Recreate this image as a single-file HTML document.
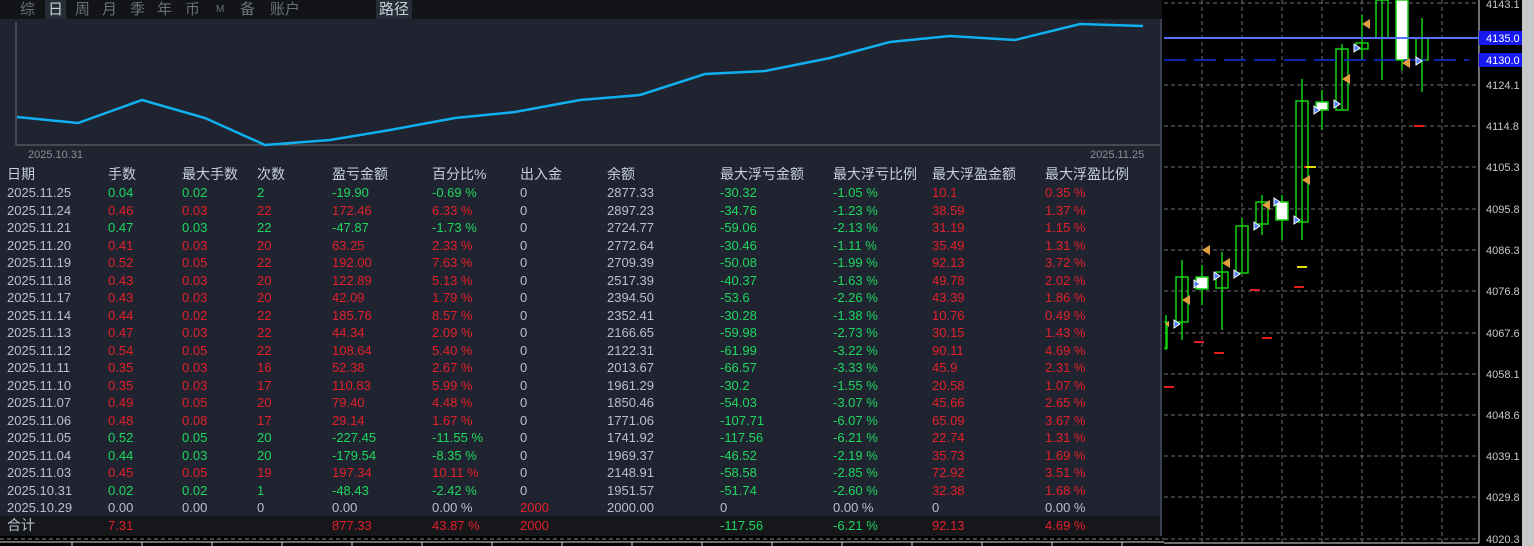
<!DOCTYPE html>
<html><head><meta charset="utf-8"><style>
*{margin:0;padding:0;box-sizing:border-box}
body{width:1534px;height:546px;background:#000;position:relative;overflow:hidden;font-family:"Liberation Sans","Noto Sans CJK SC",sans-serif;font-size:13px}
#panel{position:absolute;left:0;top:0;width:1162px;height:536px;background:#1f2430;border-right:2px solid #3a4150;border-bottom:2px solid #3a4150}
#tabs{position:absolute;left:0;top:0;width:1162px;height:19px;background:#121417}
#tabs span{position:absolute;top:0;font-size:15px;color:#6a7078;line-height:19px}
.sel{background:#262c36;color:#c8d0dc!important;padding:0 3px}
.r{position:absolute;left:0;width:1160px;height:17.5px;line-height:17.5px}
.r span{position:absolute;white-space:nowrap}
.g{color:#1ed760}.d{color:#e2202a}.w{color:#b8c0cc}
.h{color:#c8d0dc;font-size:14px}
</style></head><body>
<div id="panel">
<div id="tabs">
<span style="left:20px">综</span><span class="sel" style="left:45px">日</span><span style="left:75px">周</span><span style="left:102px">月</span><span style="left:130px">季</span><span style="left:157px">年</span><span style="left:185px">币</span><span style="left:216px;font-size:10px">M</span><span style="left:240px">备</span><span style="left:270px">账户</span><span class="sel" style="left:376px">路径</span>
</div>
<svg style="position:absolute;left:0;top:0" width="1162" height="170">
<polyline points="16,22 16,145 1160,145" fill="none" stroke="#6a6e74" stroke-width="1"/>
<polyline points="17,117 78,123 142,100 205,118 265,145 330,140 390,130 455,118 515,112 580,100 640,95 705,74 765,71 830,58 890,42 950,36 1015,40 1080,24 1143,26" fill="none" stroke="#10b0f0" stroke-width="2.5"/>
<text x="28" y="158" fill="#8a9098" font-size="11" font-family="Liberation Sans">2025.10.31</text>
<text x="1090" y="158" fill="#8a9098" font-size="11" font-family="Liberation Sans">2025.11.25</text>
</svg>
<div class="r h" style="top:166px"><span style="left:7px">日期</span><span style="left:108px">手数</span><span style="left:182px">最大手数</span><span style="left:257px">次数</span><span style="left:332px">盈亏金额</span><span style="left:432px">百分比%</span><span style="left:520px">出入金</span><span style="left:607px">余额</span><span style="left:720px">最大浮亏金额</span><span style="left:833px">最大浮亏比例</span><span style="left:932px">最大浮盈金额</span><span style="left:1045px">最大浮盈比例</span></div>
<div id="rows"></div>
<div style="position:absolute;left:0;top:516px;width:1160px;height:20px;background:#15171b"></div>
<div class="r" style="top:517px;font-size:13px"><span class="w" style="left:7px;font-size:14px">合计</span><span class="d" style="left:108px">7.31</span><span class="d" style="left:332px">877.33</span><span class="d" style="left:432px">43.87 %</span><span class="d" style="left:520px">2000</span><span class="g" style="left:720px">-117.56</span><span class="g" style="left:833px">-6.21 %</span><span class="d" style="left:932px">92.13</span><span class="d" style="left:1045px">4.69 %</span></div>
</div>
<svg style="position:absolute;left:0;top:536px" width="1164" height="10">
<line x1="0" y1="3" x2="1164" y2="3" stroke="#888" stroke-dasharray="4,3"/>
<line x1="0" y1="6" x2="1164" y2="6" stroke="#ddd"/>
<g stroke="#ddd"><line x1="72" y1="6" x2="72" y2="10"/><line x1="142" y1="6" x2="142" y2="10"/><line x1="212" y1="6" x2="212" y2="10"/><line x1="282" y1="6" x2="282" y2="10"/><line x1="352" y1="6" x2="352" y2="10"/><line x1="422" y1="6" x2="422" y2="10"/><line x1="492" y1="6" x2="492" y2="10"/><line x1="562" y1="6" x2="562" y2="10"/><line x1="632" y1="6" x2="632" y2="10"/><line x1="702" y1="6" x2="702" y2="10"/><line x1="772" y1="6" x2="772" y2="10"/><line x1="842" y1="6" x2="842" y2="10"/><line x1="912" y1="6" x2="912" y2="10"/><line x1="982" y1="6" x2="982" y2="10"/><line x1="1052" y1="6" x2="1052" y2="10"/><line x1="1122" y1="6" x2="1122" y2="10"/></g>
</svg>
<svg style="position:absolute;left:1164px;top:0" width="370" height="546">
<g stroke="#6a6e74" stroke-dasharray="4,3" stroke-width="1">
<line x1="0" y1="3" x2="315" y2="3"/><line x1="0" y1="85" x2="315" y2="85"/><line x1="0" y1="126" x2="315" y2="126"/><line x1="0" y1="167" x2="315" y2="167"/><line x1="0" y1="209" x2="315" y2="209"/><line x1="0" y1="250" x2="315" y2="250"/><line x1="0" y1="291" x2="315" y2="291"/><line x1="0" y1="333" x2="315" y2="333"/><line x1="0" y1="374" x2="315" y2="374"/><line x1="0" y1="415" x2="315" y2="415"/><line x1="0" y1="456" x2="315" y2="456"/><line x1="0" y1="497" x2="315" y2="497"/><line x1="0" y1="539" x2="315" y2="539"/>
<line x1="38" y1="0" x2="38" y2="546"/><line x1="78" y1="0" x2="78" y2="546"/><line x1="118" y1="0" x2="118" y2="546"/><line x1="158" y1="0" x2="158" y2="546"/><line x1="198" y1="0" x2="198" y2="546"/><line x1="238" y1="0" x2="238" y2="546"/><line x1="278" y1="0" x2="278" y2="546"/>
</g>
<line x1="315" y1="0" x2="315" y2="543" stroke="#ddd"/>
<line x1="0" y1="543" x2="315" y2="543" stroke="#ddd"/>
<rect x="358" y="0" width="12" height="546" fill="#c8c8c8"/>
<g stroke="#10d010" stroke-width="1.5" fill="none">
<line x1="2" y1="315" x2="2" y2="350"/><rect x="-2" y="322" width="5" height="26"/>
<line x1="18" y1="260" x2="18" y2="340"/><rect x="12" y="277" width="12" height="45"/>
<line x1="38" y1="265" x2="38" y2="305"/><rect x="32" y="277" width="12" height="12" fill="#fff"/>
<line x1="58" y1="252" x2="58" y2="330"/><rect x="52" y="272" width="12" height="16"/>
<line x1="78" y1="218" x2="78" y2="273"/><rect x="72" y="226" width="12" height="47"/>
<line x1="98" y1="195" x2="98" y2="235"/><rect x="92" y="202" width="12" height="22"/>
<line x1="118" y1="195" x2="118" y2="240"/><rect x="112" y="202" width="12" height="18" fill="#fff"/>
<line x1="138" y1="79" x2="138" y2="240"/><rect x="132" y="101" width="12" height="121"/>
<line x1="158" y1="90" x2="158" y2="130"/><rect x="152" y="102" width="12" height="8" fill="#fff"/>
<line x1="178" y1="44" x2="178" y2="110"/><rect x="172" y="49" width="12" height="61"/>
<line x1="198" y1="15" x2="198" y2="60"/><rect x="192" y="43" width="12" height="6"/>
<line x1="218" y1="0" x2="218" y2="80"/><rect x="212" y="0" width="12" height="38"/>
<line x1="238" y1="0" x2="238" y2="70"/><rect x="232" y="0" width="12" height="60" fill="#fff"/>
<line x1="258" y1="18" x2="258" y2="92"/><rect x="252" y="38" width="12" height="22"/>
</g>
<line x1="0" y1="38" x2="316" y2="38" stroke="#5070ff" stroke-width="2"/>
<line x1="0" y1="60" x2="305" y2="60" stroke="#1030e0" stroke-width="1.5" stroke-dasharray="22,8"/>
<g fill="#e02020"><rect x="0" y="386" width="10" height="2"/><rect x="30" y="341" width="10" height="2"/><rect x="50" y="352" width="10" height="2"/><rect x="98" y="337" width="10" height="2"/><rect x="140" y="166" width="10" height="2"/><rect x="86" y="289" width="10" height="2"/><rect x="130" y="286" width="10" height="2"/><rect x="250" y="125" width="10" height="2"/></g>
<rect x="133" y="266" width="10" height="2" fill="#e0e000"/><rect x="142" y="166" width="10" height="2" fill="#e0e000"/>
<g fill="#e0a040"><path d="M18 300l8-5v10z"/><path d="M38 250l8-5v10z"/><path d="M58 263l8-5v10z"/><path d="M98 205l8-5v10z"/><path d="M138 180l8-5v10z"/><path d="M178 79l8-5v10z"/><path d="M198 24l8-5v10z"/><path d="M238 63l8-5v10z"/><path d="M1 324l4-3v6z"/></g>
<g fill="#5080ff" stroke="#fff" stroke-width="1"><path d="M10 320l6 4-6 4z"/><path d="M30 280l6 4-6 4z"/><path d="M50 272l6 4-6 4z"/><path d="M70 270l6 4-6 4z"/><path d="M90 222l6 4-6 4z"/><path d="M110 198l6 4-6 4z"/><path d="M130 216l6 4-6 4z"/><path d="M150 106l6 4-6 4z"/><path d="M170 100l6 4-6 4z"/><path d="M190 44l6 4-6 4z"/><path d="M252 57l6 4-6 4z"/></g>
<rect x="315" y="31" width="43" height="14" fill="#1818f0"/><text x="322" y="42" fill="#fff" font-size="11" font-family="Liberation Sans">4135.0</text>
<rect x="315" y="53" width="43" height="14" fill="#1818f0"/><text x="322" y="64" fill="#fff" font-size="11" font-family="Liberation Sans">4130.0</text>
<g fill="#c8c8c8" font-size="11" font-family="Liberation Sans">
<text x="322" y="8">4143.1</text><text x="322" y="89">4124.1</text><text x="322" y="130">4114.8</text><text x="322" y="171">4105.3</text><text x="322" y="213">4095.8</text><text x="322" y="254">4086.3</text><text x="322" y="295">4076.8</text><text x="322" y="337">4067.6</text><text x="322" y="378">4058.1</text><text x="322" y="419">4048.6</text><text x="322" y="460">4039.1</text><text x="322" y="501">4029.8</text><text x="322" y="543">4020.3</text></g>
</svg>
<script>
var X=[7,108,182,257,332,432,520,607,720,833,932,1045];
var D=[
["2025.11.25","0.04","0.02","2","-19.90","-0.69 %","0","2877.33","-30.32","-1.05 %","10.1","0.35 %","g"],
["2025.11.24","0.46","0.03","22","172.46","6.33 %","0","2897.23","-34.76","-1.23 %","38.59","1.37 %","d"],
["2025.11.21","0.47","0.03","22","-47.87","-1.73 %","0","2724.77","-59.06","-2.13 %","31.19","1.15 %","g"],
["2025.11.20","0.41","0.03","20","63.25","2.33 %","0","2772.64","-30.46","-1.11 %","35.49","1.31 %","d"],
["2025.11.19","0.52","0.05","22","192.00","7.63 %","0","2709.39","-50.08","-1.99 %","92.13","3.72 %","d"],
["2025.11.18","0.43","0.03","20","122.89","5.13 %","0","2517.39","-40.37","-1.63 %","49.78","2.02 %","d"],
["2025.11.17","0.43","0.03","20","42.09","1.79 %","0","2394.50","-53.6","-2.26 %","43.39","1.86 %","d"],
["2025.11.14","0.44","0.02","22","185.76","8.57 %","0","2352.41","-30.28","-1.38 %","10.76","0.49 %","d"],
["2025.11.13","0.47","0.03","22","44.34","2.09 %","0","2166.65","-59.98","-2.73 %","30.15","1.43 %","d"],
["2025.11.12","0.54","0.05","22","108.64","5.40 %","0","2122.31","-61.99","-3.22 %","90.11","4.69 %","d"],
["2025.11.11","0.35","0.03","16","52.38","2.67 %","0","2013.67","-66.57","-3.33 %","45.9","2.31 %","d"],
["2025.11.10","0.35","0.03","17","110.83","5.99 %","0","1961.29","-30.2","-1.55 %","20.58","1.07 %","d"],
["2025.11.07","0.49","0.05","20","79.40","4.48 %","0","1850.46","-54.03","-3.07 %","45.66","2.65 %","d"],
["2025.11.06","0.48","0.08","17","29.14","1.67 %","0","1771.06","-107.71","-6.07 %","65.09","3.67 %","d"],
["2025.11.05","0.52","0.05","20","-227.45","-11.55 %","0","1741.92","-117.56","-6.21 %","22.74","1.31 %","g"],
["2025.11.04","0.44","0.03","20","-179.54","-8.35 %","0","1969.37","-46.52","-2.19 %","35.73","1.69 %","g"],
["2025.11.03","0.45","0.05","19","197.34","10.11 %","0","2148.91","-58.58","-2.85 %","72.92","3.51 %","d"],
["2025.10.31","0.02","0.02","1","-48.43","-2.42 %","0","1951.57","-51.74","-2.60 %","32.38","1.68 %","g"],
["2025.10.29","0.00","0.00","0","0.00","0.00 %","2000","2000.00","0","0.00 %","0","0.00 %","w"]];
var h="";D.forEach(function(r,i){h+='<div class="r" style="top:'+(184+i*17.5)+'px">';for(var j=0;j<12;j++){var c;if(j==0||j==7)c="w";else if(j==6)c=(r[6]=="0"?"w":"d");else if(r[12]=="w")c="w";else if(j>=8&&j<=9)c="g";else if(j>=10)c="d";else c=r[12];h+='<span class="'+c+'" style="left:'+X[j]+'px">'+r[j]+'</span>';}h+='</div>';});
document.getElementById("rows").innerHTML=h;
</script>
</body></html>
